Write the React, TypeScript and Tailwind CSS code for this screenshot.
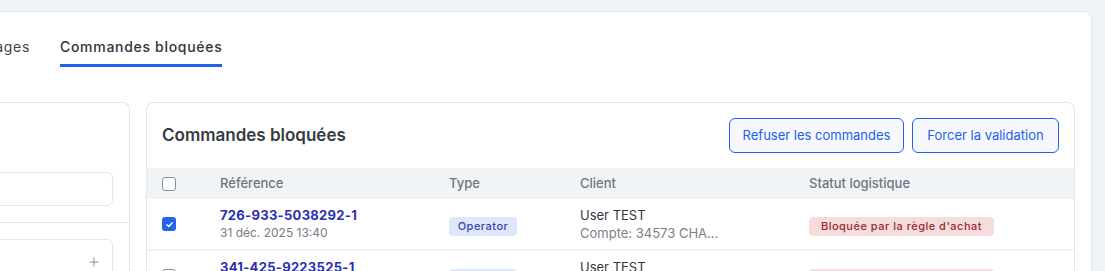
import { Plus } from "lucide-react"

const rows = [
  {
    ref: "726-933-5038292-1",
    date: "31 déc. 2025 13:40",
    type: "Operator",
    client: "User TEST",
    account: "Compte: 34573 CHA...",
    status: "Bloquée par la règle d'achat",
    checked: true,
  },
  {
    ref: "341-425-9223525-1",
    date: "31 déc. 2025 13:38",
    type: "Operator",
    client: "User TEST",
    account: "Compte: 34573 CHA...",
    status: "Bloquée par la règle d'achat",
    checked: false,
  },
]

function Checkbox({ checked }: { checked?: boolean }) {
  if (checked) {
    return (
      <span className="flex h-[14px] w-[14px] items-center justify-center rounded-[3px] bg-[#2563eb]">
        <svg width="9" height="9" viewBox="0 0 12 12" fill="none">
          <path d="M2.5 6.2 5 8.6 9.6 3.6" stroke="white" strokeWidth="1.8" strokeLinecap="round" strokeLinejoin="round" />
        </svg>
      </span>
    )
  }
  return <span className="block h-[14px] w-[14px] rounded-[3px] border border-[#8b919c] bg-white" />
}

export default function App() {
  return (
    <div
      className="h-[271px] w-[1105px] overflow-hidden bg-[#f1f4f7] pt-[11px]"
      style={{ fontFamily: "Inter, 'Noto Sans', sans-serif" }}
    >
      <div className="ml-[-201px] w-[1293px] rounded-lg border border-[#e3e6ea] bg-white px-4">
        {/* Onglets */}
        <div className="flex items-end gap-[30px]">
          <div className="flex w-[214px] justify-end gap-[30px]">
            <div className="pt-[25px] pb-[10px] text-[14px] leading-5 tracking-[0.7px] text-[#3f434a]">Paramètres</div>
            <div className="pt-[25px] pb-[10px] text-[14px] leading-5 tracking-[0.7px] text-[#3f434a]">Messages</div>
          </div>
          <div className="border-b-[3px] border-[#1f5ff2] pt-[25px] pb-[7px] text-[14px] leading-5 font-medium tracking-[0.7px] text-[#2f333a]">
            Commandes bloquées
          </div>
        </div>

        <div className="mt-[35px] flex gap-4">
          {/* Panneau filtres */}
          <div className="w-[314px] shrink-0 rounded-t-lg border border-b-0 border-[#e3e6ea]">
            <div className="px-4 pt-[69px] pb-4">
              <div className="h-[34px] rounded-md border border-[#e3e6ea] bg-white" />
            </div>
            <div className="border-t border-[#e3e6ea] px-4 pt-4">
              <div className="flex h-[44px] items-center justify-end rounded-t-md border border-b-0 border-[#e3e6ea] pr-[11px]">
                <Plus size={14} strokeWidth={1.5} className="text-[#7b8089]" />
              </div>
            </div>
          </div>

          {/* Tableau */}
          <div className="min-w-0 flex-1 rounded-t-lg border border-b-0 border-[#e3e6ea]">
            <div className="flex items-center justify-between p-[15px]">
              <h2 className="text-[17px] font-semibold text-[#363b43]">Commandes bloquées</h2>
              <div className="flex gap-2">
                <button className="h-[35px] w-[175px] rounded-md border border-[#1f5ff2] bg-[#f6f8fe] text-[13px] text-[#2360e8]">
                  Refuser les commandes
                </button>
                <button className="h-[35px] w-[147px] rounded-md border border-[#1f5ff2] bg-[#f6f8fe] text-[13px] text-[#2360e8]">
                  Forcer la validation
                </button>
              </div>
            </div>

            <div className="grid h-[31px] grid-cols-[73px_229px_131px_229px_1fr] items-center bg-[#f1f4f7] text-[13px] font-medium text-[#6f7580]">
              <div className="pl-[15px]">
                <Checkbox />
              </div>
              <div>Référence</div>
              <div>Type</div>
              <div>Client</div>
              <div>Statut logistique</div>
            </div>

            {rows.map((r) => (
              <div
                key={r.ref}
                className="grid h-[52px] grid-cols-[73px_229px_131px_229px_1fr] items-center border-b-2 border-[#eef1f5]"
              >
                <div className="pl-[15px]">
                  <Checkbox checked={r.checked} />
                </div>
                <div className="leading-[18px]">
                  <div className="text-[13px] font-bold tracking-[0.3px] text-[#2b2fb2]">{r.ref}</div>
                  <div className="text-[12px] text-[#777c85]">{r.date}</div>
                </div>
                <div>
                  <span className="inline-flex h-[19px] w-[68px] items-center justify-center rounded-[4px] bg-[#dde7fb] text-[11px] font-medium tracking-[0.5px] text-[#3a44a6]">
                    {r.type}
                  </span>
                </div>
                <div className="leading-[18px]">
                  <div className="text-[13px] text-[#33373d]">{r.client}</div>
                  <div className="text-[13px] text-[#7a7f88]">{r.account}</div>
                </div>
                <div>
                  <span className="inline-flex h-[19px] w-[185px] items-center justify-center rounded-[4px] bg-[#f5dcdd] text-[11px] font-medium tracking-[0.5px] text-[#9a2a33]">
                    {r.status}
                  </span>
                </div>
              </div>
            ))}
          </div>
        </div>
      </div>
    </div>
  )
}
